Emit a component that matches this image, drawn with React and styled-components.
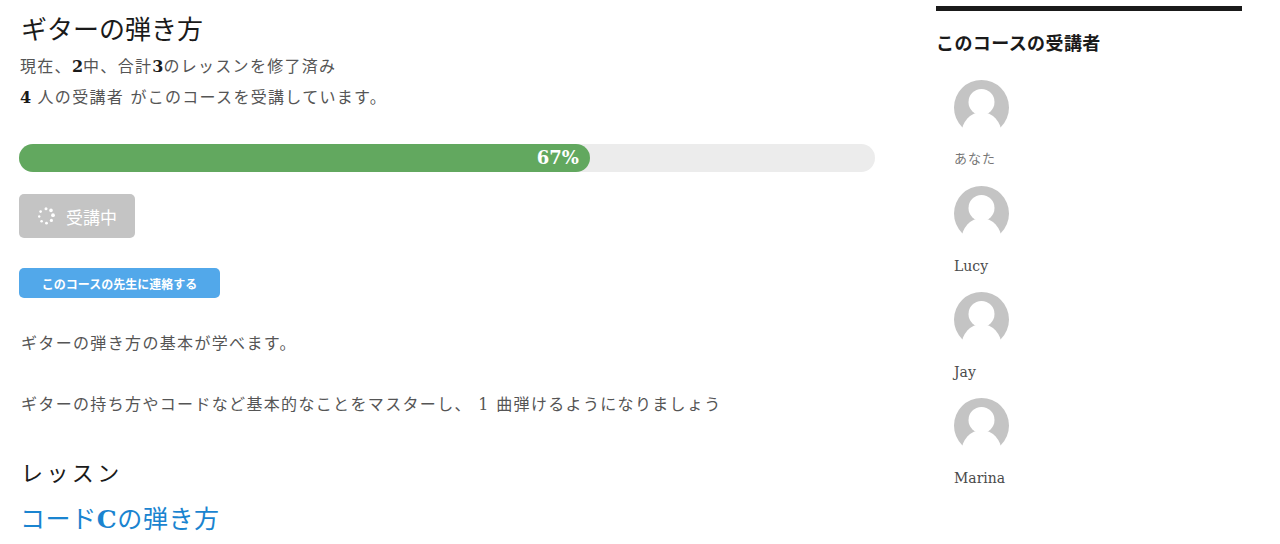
import React from "react";
import styled, { createGlobalStyle } from "styled-components";

const Global = createGlobalStyle`
  html, body { margin: 0; padding: 0; background: #fff; }
  body { font-family: "DejaVu Serif", "Noto Sans CJK JP", serif; color: #4a4a4a; }
`;
const Page = styled.div`
  width: 1280px; height: 544px; overflow: hidden; box-sizing: border-box;
  display: flex; align-items: flex-start; padding-left: 19px;
`;
const Main = styled.main`width: 856px; flex: none; padding-top: 13px;`;
const Side = styled.aside`width: 306px; flex: none; margin-left: 61px; padding-top: 6px;`;
const Title = styled.h1`
  margin: 0 0 4px 2px; font-size: 26px; line-height: 34px; font-weight: 400; color: #1a1a1a;
`;
const Line = styled.p`
  margin: 0 0 0 1px; font-size: 16px; line-height: 31px; color: #555; letter-spacing: 1.3px;
  b { color: #1a1a1a; font-weight: 700; letter-spacing: 0; }
`;
const Track = styled.div`margin-top: 31px; height: 28px; border-radius: 14px; background: #ececec;`;
const Fill = styled.div`
  height: 100%; border-radius: 14px; background: #62a85f; color: #fff; font-weight: 700; font-size: 18px;
  line-height: 28px; text-align: right; padding-right: 11px; box-sizing: border-box;
`;
const Taking = styled.button`
  display: flex; align-items: center; gap: 11px; margin-top: 22px; width: 116px; height: 44px; padding: 0 0 0 18px;
  border: 0; border-radius: 5px; background: #c4c4c4; color: #fff; font: inherit; font-size: 17px;
`;
const Contact = styled.button`
  display: block; margin-top: 30px; width: 201px; height: 30px; padding: 0; border: 0; border-radius: 5px;
  background: #52a8ea; color: #fff; font: inherit; font-size: 12px; font-weight: 700;
`;
const Description = styled.section`
  display: flex; flex-direction: column; gap: 31px; margin: 31px 0 0 2px;
`;
const Body = styled.p`
  margin: 0; font-size: 16px; line-height: 30px; color: #555; letter-spacing: 1.34px;
`;
const H2 = styled.h2`margin: 39px 0 0 2px; font-size: 22px; line-height: 30px; font-weight: 400; color: #1a1a1a; letter-spacing: 3.4px;`;
const Lesson = styled.a`
  display: block; margin: 14px 0 0 1px; font-size: 25px; line-height: 34px; color: #1a84d0; letter-spacing: .6px;
  b { font-weight: 700; }
`;
const Rule = styled.div`height: 5px; background: #1a1a1a;`;
const SideTitle = styled.h3`
  margin: 20px 0 0; font: 700 18px/26px "Liberation Sans", "Noto Sans CJK JP", sans-serif; color: #1a1a1a; letter-spacing: .4px;
`;
const Students = styled.ul`list-style: none; margin: 23px 0 0; padding: 0 0 0 18px;`;
const Student = styled.li`height: 106px;`;
const Name = styled.div`
  margin-top: ${p => p.$small ? "14px" : "15px"}; line-height: 20px;
  font-size: ${p => p.$small ? "13px" : "14px"}; color: ${p => p.$small ? "#777" : "#4a4a4a"};
  letter-spacing: ${p => p.$small ? "1px" : "0"};
`;

const Avatar = () => (
  <svg width="55" height="55" viewBox="0 0 55 55" style={{ display: "block" }}>
    <circle cx="27.5" cy="27.5" r="27.5" fill="#c4c4c4" />
    <circle cx="27.5" cy="22" r="13" fill="#fff" />
    <ellipse cx="27.5" cy="54" rx="20" ry="22" fill="#fff" />
    <rect x="0" y="50" width="55" height="5" fill="#fff" />
  </svg>
);
const Spinner = () => (
  <svg width="18" height="18" viewBox="0 0 18 18" fill="#fff">
    {[[9,1.7,1.5],[14,3.4,1.8],[16,8.2,1.9],[14.4,13.4,1.6],[9.5,16.2,1.4],[4.6,14.3,1.3],[2.2,9.5,1.2],[3.6,4.6,1.3]].map(([x,y,r],i)=>(
      <circle key={i} cx={x} cy={y} r={r} />
    ))}
  </svg>
);
const names = ["あなた", "Lucy", "Jay", "Marina"];

export default function App() {
  return (
    <Page>
      <Global />
      <Main>
        <Title>ギターの弾き方</Title>
        <Line>現在、<b>2</b>中、合計<b>3</b>のレッスンを修了済み</Line>
        <Line><b>4</b> 人の受講者 がこのコースを受講しています。</Line>
        <Track><Fill style={{ width: "66.7%" }}>67%</Fill></Track>
        <Taking><Spinner />受講中</Taking>
        <Contact>このコースの先生に連絡する</Contact>
        <Description>
          <Body>ギターの弾き方の基本が学べます。</Body>
          <Body>ギターの持ち方やコードなど基本的なことをマスターし、 1 曲弾けるようになりましょう</Body>
        </Description>
        <H2>レッスン</H2>
        <Lesson>コード<b>C</b>の弾き方</Lesson>
      </Main>
      <Side>
        <Rule />
        <SideTitle>このコースの受講者</SideTitle>
        <Students>
          {names.map((n, i) => (
            <Student key={n}><Avatar /><Name $small={i === 0}>{n}</Name></Student>
          ))}
        </Students>
      </Side>
    </Page>
  );
}
